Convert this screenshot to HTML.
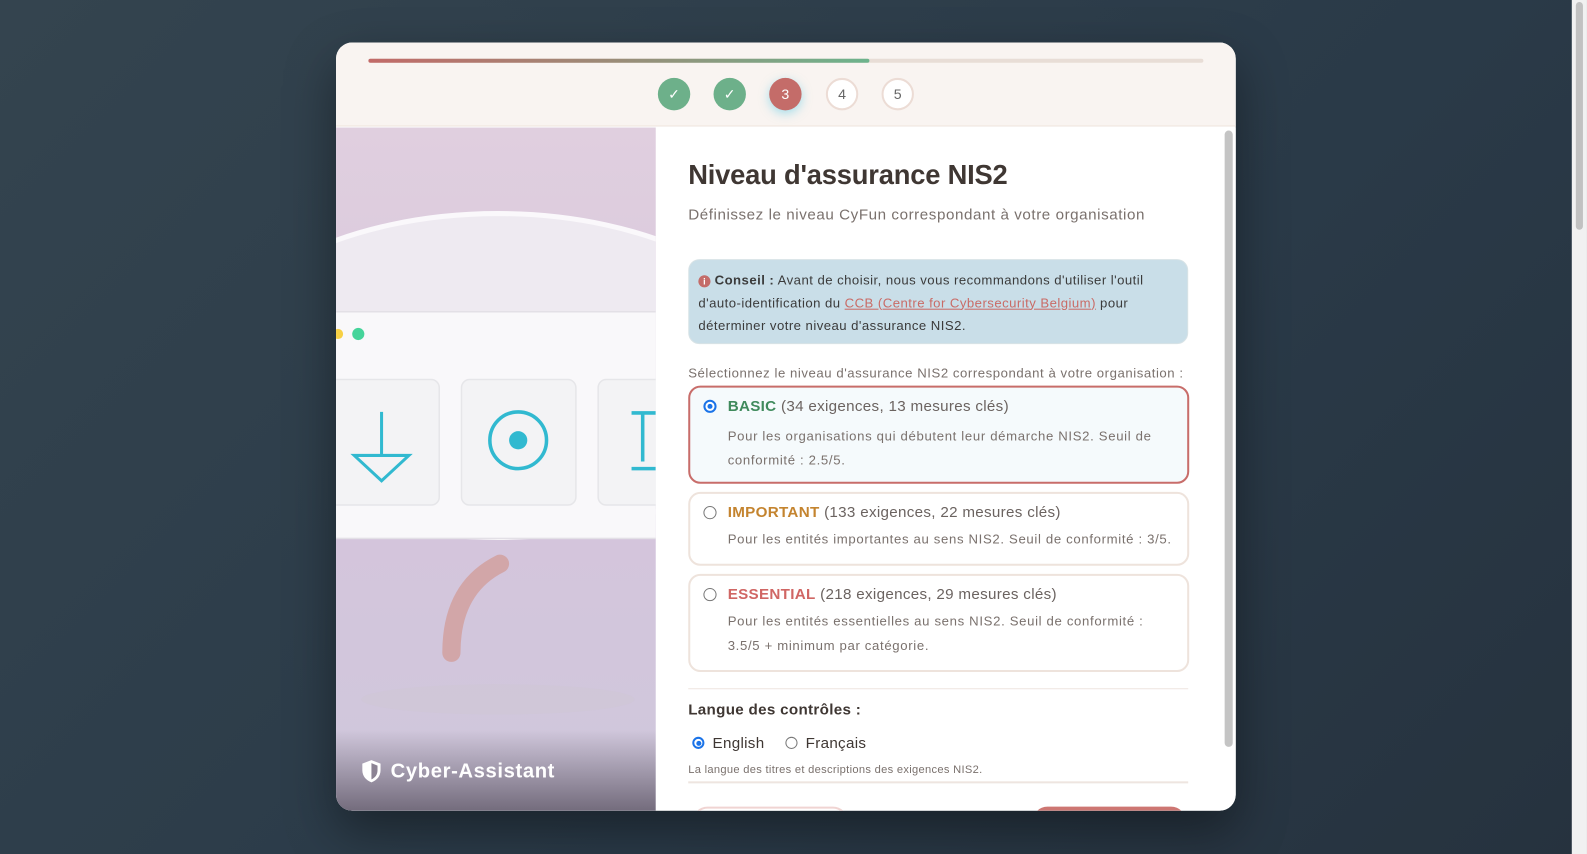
<!DOCTYPE html>
<html style="width:1587px;height:854px;overflow:hidden"><head><meta charset="utf-8"><style>
*{box-sizing:border-box;margin:0;padding:0}
body{width:1587px;height:854px;overflow:hidden;background:#2c3b48;font-family:"Liberation Sans",sans-serif;position:relative}
#w{position:absolute;left:0;top:0;width:1587px;height:854px;transform:scale(1.0121);transform-origin:0 0;background:linear-gradient(135deg,#34444f,#2a3a48 60%,#26323e)}
.sb{position:absolute;left:1553px;top:0;width:15px;height:854px;background:#f1f1f1}
.sb i{position:absolute;left:4px;top:2px;width:7px;height:225px;background:#c1c1c1;border-radius:4px}
.modal{position:absolute;left:332px;top:42px;width:889px;height:759px;border-radius:16px;overflow:hidden;background:#fff;box-shadow:0 20px 50px rgba(0,0,0,.4)}
.hdr{position:absolute;left:0;top:0;width:889px;height:83px;background:#f9f4f1;border-bottom:1px solid #eee3dc}
.bar{position:absolute;left:32px;top:16px;width:825px;height:4px;border-radius:2px;background:#e8ddd6}
.bar i{position:absolute;left:0;top:0;height:4px;width:495px;border-radius:2px;background:linear-gradient(90deg,#c26a68,#9a8c78 50%,#6db38c)}
.st{position:absolute;top:35px;width:32px;height:32px;border-radius:50%;font-size:14px;display:flex;align-items:center;justify-content:center}
.ok{background:#6db08a;color:#fff}
.cur{background:#c46c69;color:#fff;box-shadow:0 3px 10px rgba(80,200,230,.5)}
.nx{background:#fff;border:2px solid #ecdcd5;color:#666}
.left{position:absolute;left:0;top:84px;width:316px;height:675px;background:linear-gradient(180deg,#e0cfdf,#d4c5dc 60%,#cfc8dc);overflow:hidden}
.right{position:absolute;left:316px;top:84px;width:573px;height:675px;background:#fff;overflow:hidden}
.vsb{position:absolute;left:562px;top:3px;width:8px;height:609px;background:#c4c4c4;border-radius:4px}
h1{position:absolute;left:32px;top:32px;font-size:27px;color:#3f3733;font-weight:bold;letter-spacing:-.2px}
.sub{position:absolute;left:32px;top:78px;font-size:15px;color:#7a716d;letter-spacing:.55px}
.tip{position:absolute;left:32px;top:130px;width:494px;height:84px;background:#c9dee8;border:1px solid #d8e3e6;border-radius:11px;padding:9px 9px;font-size:13px;line-height:22.5px;color:#3b3b3b;letter-spacing:.45px}
.tip a{color:#c96b66;text-decoration:underline}
.ii{display:inline-block;width:12px;height:12px;border-radius:50%;background:#c46c69;color:#fff;font-size:9px;text-align:center;line-height:12px;font-weight:bold;vertical-align:0;letter-spacing:0}
.lbl{position:absolute;left:32px;top:235px;font-size:13px;color:#7a716d;letter-spacing:.55px;white-space:nowrap}
.opt{position:absolute;left:32px;width:495px;border:2px solid #eee3dc;border-radius:12px;padding:10px 12px 0 37px}
.opt.sel{border-color:#c86d6a;background:#f5fafc}
.opt .r{position:absolute;left:13px;top:12px;width:13px;height:13px;border-radius:50%;border:1px solid #777;background:#fff}
.opt.sel .r{border:2px solid #1a73e8}
.opt.sel .r:after{content:"";position:absolute;left:2px;top:2px;width:5px;height:5px;border-radius:50%;background:#1a73e8}
.t{font-size:15px;color:#6b6360;letter-spacing:.3px}
.t b{font-weight:bold}
.d{font-size:13px;color:#7a716d;line-height:24px;margin-top:9px;letter-spacing:.65px}
.hr{position:absolute;left:32px;width:494px;height:2px;background:#eee5e0}
.lt{position:absolute;left:32px;top:567px;font-size:15px;font-weight:bold;color:#3f3733;letter-spacing:.3px}
.lr{position:absolute;top:600px;font-size:15px;color:#3f3733;letter-spacing:.3px}
.rb{display:inline-block;width:12px;height:12px;border-radius:50%;border:1px solid #777;vertical-align:-1px;margin-right:8px;position:relative;background:#fff}
.rb.on{border:2px solid #1a73e8}
.rb.on:after{content:"";position:absolute;left:1.5px;top:1.5px;width:5px;height:5px;border-radius:50%;background:#1a73e8}
.note{position:absolute;left:32px;top:629px;font-size:11px;color:#7a716d;letter-spacing:.3px}
</style></head><body><div id="w">
<div class="sb"><i></i></div>
<div class="modal">
 <div class="hdr">
  <div class="bar"><i></i></div>
  <div class="st ok" style="left:318px">✓</div>
  <div class="st ok" style="left:373px">✓</div>
  <div class="st cur" style="left:428px">3</div>
  <div class="st nx" style="left:484px">4</div>
  <div class="st nx" style="left:539px">5</div>
 </div>
 <div class="left">
  <svg width="316" height="675" viewBox="0 0 316 675" style="position:absolute;left:0;top:0">
   <ellipse cx="160" cy="245" rx="290" ry="160" fill="#eeeaf1" stroke="#faf8fb" stroke-width="5"/>
   <rect x="-10" y="182" width="340" height="224" fill="#f9f8fa" stroke="#e3e0e6" stroke-width="1.5"/>
   <circle cx="2" cy="204" r="5" fill="#f7d044"/>
   <circle cx="22" cy="204" r="6" fill="#45d49a"/>
   <rect x="-10" y="249" width="112" height="124" rx="8" fill="#f3f3f5" stroke="#e6e6e9" stroke-width="1.5"/>
   <rect x="124" y="249" width="113" height="124" rx="8" fill="#f3f3f5" stroke="#e6e6e9" stroke-width="1.5"/>
   <rect x="259" y="249" width="80" height="124" rx="8" fill="#f3f3f5" stroke="#e6e6e9" stroke-width="1.5"/>
   <path d="M45 281 V323 M18 324 H72 L45 349 Z" fill="none" stroke="#31b9d0" stroke-width="3"/>
   <circle cx="180" cy="309" r="28" fill="none" stroke="#31b9d0" stroke-width="3.5"/>
   <circle cx="180" cy="309" r="9" fill="#31b9d0"/>
   <path d="M292 282 H316 M292 337 H316 M303 282 V330" stroke="#31b9d0" stroke-width="3.5" fill="none"/>
   <path d="M162 431 Q114 455 114 519" fill="none" stroke="#d2a6a8" stroke-width="18" stroke-linecap="round"/>
   <ellipse cx="160" cy="565" rx="135" ry="15" fill="#cfc6d6" opacity=".6"/>
  </svg>
  <div style="position:absolute;left:0;top:595px;width:316px;height:80px;background:linear-gradient(180deg,rgba(120,110,130,0),rgba(100,92,108,.85))"></div>
  <div style="position:absolute;left:24px;top:624px;color:#fff;font-size:20px;font-weight:bold;display:flex;align-items:center;gap:8px;letter-spacing:.6px">
   <svg width="22" height="24" viewBox="0 0 22 24"><path d="M11 1 L20 4.5 V11 C20 17 16 21 11 23 C6 21 2 17 2 11 V4.5 Z" fill="#fff"/><path d="M11 4 V20 C14.5 18.5 17 15.5 17 11 V6.5 Z" fill="#8c8394"/></svg>
   Cyber-Assistant</div>
 </div>
 <div class="right">
  <h1>Niveau d'assurance NIS2</h1>
  <div class="sub">Définissez le niveau CyFun correspondant à votre organisation</div>
  <div class="tip"><span class="ii">i</span> <b>Conseil :</b> Avant de choisir, nous vous recommandons d'utiliser l'outil d'auto-identification du <a>CCB (Centre for Cybersecurity Belgium)</a> pour déterminer votre niveau d'assurance NIS2.</div>
  <div class="lbl">Sélectionnez le niveau d'assurance NIS2 correspondant à votre organisation :</div>
  <div class="opt sel" style="top:255px;height:97px"><span class="r"></span><div class="t"><b style="color:#3f8a5c">BASIC</b> (34 exigences, 13 mesures clés)</div><div class="d">Pour les organisations qui débutent leur démarche NIS2. Seuil de conformité : 2.5/5.</div></div>
  <div class="opt" style="top:360px;height:73px"><span class="r"></span><div class="t"><b style="color:#c4842f">IMPORTANT</b> (133 exigences, 22 mesures clés)</div><div class="d" style="margin-top:6px">Pour les entités importantes au sens NIS2. Seuil de conformité : 3/5.</div></div>
  <div class="opt" style="top:441px;height:97px"><span class="r"></span><div class="t"><b style="color:#d06664">ESSENTIAL</b> (218 exigences, 29 mesures clés)</div><div class="d" style="margin-top:6px">Pour les entités essentielles au sens NIS2. Seuil de conformité : 3.5/5 + minimum par catégorie.</div></div>
  <div class="hr" style="top:554px;height:1px"></div>
  <div class="lt">Langue des contrôles :</div>
  <div class="lr" style="left:36px"><span class="rb on"></span>English</div>
  <div class="lr" style="left:128px"><span class="rb"></span>Français</div>
  <div class="note">La langue des titres et descriptions des exigences NIS2.</div>
  <div class="hr" style="top:646px"></div>
  <div style="position:absolute;left:36px;top:671px;width:154px;height:30px;border:2px solid #f0d4d2;border-radius:15px;background:#fff"></div>
  <div style="position:absolute;left:372px;top:671px;width:152px;height:30px;border-radius:15px;background:#cd7672"></div>
  <div class="vsb"></div>
 </div>
</div>
</div></body></html>
